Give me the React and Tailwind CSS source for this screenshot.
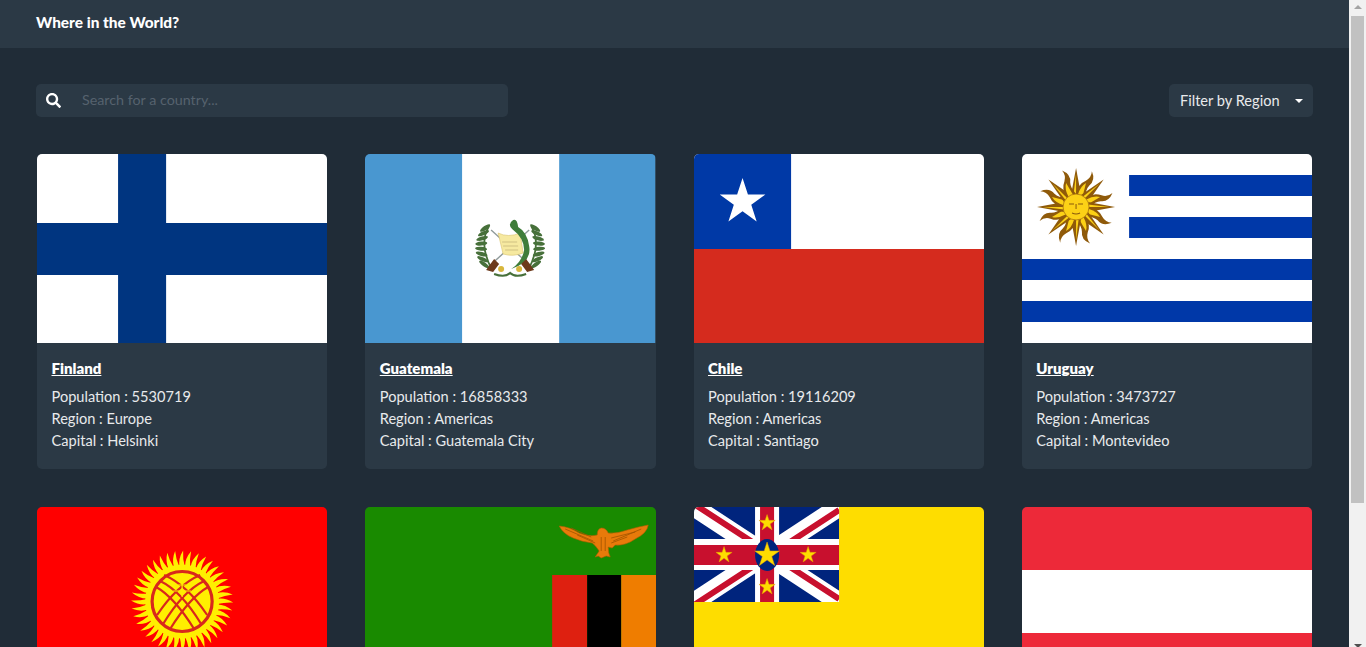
import React from "react";
import { FaSearch } from "react-icons/fa";

const range = (n) => Array.from({ length: n }, (_, i) => i);

const star = (cx, cy, r) =>
  range(10)
    .map((i) => {
      const rad = i % 2 === 0 ? r : r * 0.382;
      const a = (Math.PI / 5) * i - Math.PI / 2;
      return `${(cx + rad * Math.cos(a)).toFixed(2)},${(cy + rad * Math.sin(a)).toFixed(2)}`;
    })
    .join(" ");

function Finland() {
  return (
    <>
      <rect width="290" height="189" fill="#fff" />
      <rect x="81" width="48" height="189" fill="#003580" />
      <rect y="69" width="290" height="52" fill="#003580" />
    </>
  );
}

function Guatemala() {
  const leaves = range(8);
  return (
    <>
      <rect width="290" height="189" fill="#4997D0" />
      <rect x="97" width="97" height="189" fill="#fff" />
      <g stroke="#8f9a9a" strokeWidth="1.4">
        <line x1="122" y1="114" x2="164" y2="76" />
        <line x1="168" y1="114" x2="126" y2="76" />
      </g>
      {leaves.map((i) => (
        <g key={i} fill="#47703a">
          <ellipse cx={120 - Math.sin(i / 2.4) * 4} cy={74 + i * 5.2} rx="6" ry="2" transform={`rotate(${-35 + i * 10} ${120 - Math.sin(i / 2.4) * 4} ${74 + i * 5.2})`} />
          <ellipse cx={170 + Math.sin(i / 2.4) * 4} cy={74 + i * 5.2} rx="6" ry="2" transform={`rotate(${35 - i * 10} ${170 + Math.sin(i / 2.4) * 4} ${74 + i * 5.2})`} />
        </g>
      ))}
      <path d="M124 72Q113 90 127 116M166 72Q177 90 163 116" fill="none" stroke="#47703a" strokeWidth="1.8" />
      <path d="M133 79Q143 84 155 79L158 99Q148 103 138 100Z" fill="#f6e9a0" stroke="#d9c26b" strokeWidth=".6" />
      <path d="M137 88H152M138 92H153M140 96H153" stroke="#a89b66" strokeWidth=".5" />
      <path d="M148 66Q142 70 147 75Q159 84 159 96Q157 108 146 115Q167 108 164 92Q162 78 153 73Q152 64 148 66Z" fill="#3f7d3a" />
      <path d="M129 105L121 116L128 118L134 110ZM161 105L169 116L162 118L156 110Z" fill="#6d3a1c" />
      <circle cx="136" cy="115" r="3" fill="#d8b73c" />
      <circle cx="154" cy="115" r="3" fill="#d8b73c" />
      <path d="M129 120Q140 124 145 119Q150 124 161 120" fill="none" stroke="#47703a" strokeWidth="2" />
    </>
  );
}

function Chile() {
  return (
    <>
      <rect width="290" height="95" fill="#fff" />
      <rect y="95" width="290" height="94" fill="#D52B1E" />
      <rect width="97" height="95" fill="#0039A6" />
      <polygon points={star(48.5, 48, 24)} fill="#fff" />
    </>
  );
}

function Uruguay() {
  const cx = 54;
  const cy = 53;
  return (
    <>
      <rect width="290" height="189" fill="#fff" />
      <rect x="107" y="21" width="183" height="21" fill="#0038A8" />
      <rect x="107" y="63" width="183" height="21" fill="#0038A8" />
      <rect y="105" width="290" height="21" fill="#0038A8" />
      <rect y="147" width="290" height="21" fill="#0038A8" />
      {range(16).map((i) => (
        <g key={i} transform={`rotate(${i * 22.5} ${cx} ${cy})`}>
          <path
            d={
              i % 2 === 0
                ? `M${cx - 5} ${cy - 12}L${cx} ${cy - 39}L${cx + 5} ${cy - 12}Z`
                : `M${cx - 5} ${cy - 12}Q${cx - 7} ${cy - 22} ${cx - 1} ${cy - 28}Q${cx + 3} ${cy - 33} ${cx + 1} ${cy - 39}Q${cx + 8} ${cy - 32} ${cx + 4} ${cy - 25}Q${cx + 2} ${cy - 20} ${cx + 5} ${cy - 12}Z`
            }
            fill="#8f5a0a"
          />
          <path
            d={
              i % 2 === 0
                ? `M${cx - 2.6} ${cy - 12}L${cx} ${cy - 33}L${cx} ${cy - 12}Z`
                : `M${cx - 3} ${cy - 12}Q${cx - 4} ${cy - 21} ${cx} ${cy - 26}L${cx + 2} ${cy - 12}Z`
            }
            fill="#FCD116"
          />
        </g>
      ))}
      <circle cx={cx} cy={cy} r="13" fill="#FCD116" stroke="#a9740f" strokeWidth=".8" />
      <path d={`M${cx - 7} ${cy - 3}H${cx - 2}M${cx + 2} ${cy - 3}H${cx + 7}M${cx} ${cy - 3}V${cy + 2}M${cx - 4} ${cy + 6}Q${cx} ${cy + 8} ${cx + 4} ${cy + 6}`} stroke="#8a5a0c" strokeWidth="1" fill="none" />
    </>
  );
}

function Kyrgyzstan() {
  const cx = 145;
  const cy = 94.5;
  return (
    <>
      <rect width="290" height="189" fill="#FF0000" />
      {range(40).map((i) => (
        <path
          key={i}
          d={`M${cx - 2.6} ${cy - 35}Q${cx - 4} ${cy - 43} ${cx + 1} ${cy - 51}Q${cx + 0.5} ${cy - 43} ${cx + 2.6} ${cy - 35}Z`}
          fill="#FFEF00"
          transform={`rotate(${i * 9} ${cx} ${cy})`}
        />
      ))}
      <circle cx={cx} cy={cy} r="37" fill="#FFEF00" />
      <circle cx={cx} cy={cy} r="30" fill="#FFEF00" stroke="#D8281C" strokeWidth="3.2" />
      <g fill="none" stroke="#D8281C" strokeWidth="2.2">
        <path d="M163 68Q140 78 120 108M167 74Q146 84 126 117M171 80Q153 90 133 122" />
        <path d="M127 68Q150 78 170 108M123 74Q144 84 164 117M119 80Q137 90 157 122" />
      </g>
      <path d="M141 78h8M136 84h18M145 74v16" stroke="#FFEF00" strokeWidth="1.2" />
    </>
  );
}

function Zambia() {
  return (
    <>
      <rect width="291" height="189" fill="#198A00" />
      <rect x="187" y="68" width="35" height="121" fill="#DE2010" />
      <rect x="222" y="68" width="34" height="121" fill="#000" />
      <rect x="256" y="68" width="35" height="121" fill="#EF7D00" />
      <path
        d="M194 19Q205 20 214 26Q224 30 232 28Q232 22 236 21Q241 21 243 26Q252 27 262 23Q272 20 283 18Q282 26 270 32Q260 39 250 38L247 41L243 40Q243 46 245 50L241 49L236 51L233 49L230 50L234 44Q230 38 227 36Q217 35 208 31Q198 27 194 19Z"
        fill="#E87A0A"
        stroke="#b35c00"
        strokeWidth=".6"
      />
      <path d="M200 22L228 34M206 21L226 30M212 28L230 36M276 22L248 34M270 25L246 31M262 30L246 36M236 30L236 44M240 30L240 44" stroke="#a15400" strokeWidth=".8" fill="none" />
    </>
  );
}

function Niue() {
  return (
    <>
      <rect width="290" height="189" fill="#FEDD00" />
      <svg x="0" y="0" width="145" height="95" viewBox="0 0 145 95">
        <rect width="145" height="95" fill="#00247D" />
        <path d="M0 0L145 95M145 0L0 95" stroke="#fff" strokeWidth="19" />
        <path d="M0 0L72 47M145 95L73 48" stroke="#C8102E" strokeWidth="6" transform="translate(0 -3)" />
        <path d="M145 0L73 47M0 95L72 48" stroke="#C8102E" strokeWidth="6" transform="translate(0 3)" />
        <rect x="61" width="24" height="95" fill="#fff" />
        <rect y="32" width="145" height="31" fill="#fff" />
        <rect x="66" width="14" height="95" fill="#C8102E" />
        <rect y="38" width="145" height="20" fill="#C8102E" />
        <ellipse cx="73" cy="48" rx="12" ry="16" fill="#00247D" />
        <polygon points={star(73, 48, 13)} fill="#FEDD00" stroke="#e59a00" strokeWidth=".5" />
        <polygon points={star(73, 16, 8.5)} fill="#FEDD00" stroke="#e59a00" strokeWidth=".5" />
        <polygon points={star(73, 80, 8.5)} fill="#FEDD00" stroke="#e59a00" strokeWidth=".5" />
        <polygon points={star(30, 48, 8.5)} fill="#FEDD00" stroke="#e59a00" strokeWidth=".5" />
        <polygon points={star(114, 48, 8.5)} fill="#FEDD00" stroke="#e59a00" strokeWidth=".5" />
      </svg>
    </>
  );
}

function Austria() {
  return (
    <>
      <rect width="290" height="63" fill="#ED2939" />
      <rect y="63" width="290" height="63" fill="#fff" />
      <rect y="126" width="290" height="63" fill="#ED2939" />
    </>
  );
}

// the second row only shows its flags above the fold
const countries = [
  { name: "Finland", population: 5530719, region: "Europe", capital: "Helsinki", Flag: Finland },
  { name: "Guatemala", population: 16858333, region: "Americas", capital: "Guatemala City", Flag: Guatemala },
  { name: "Chile", population: 19116209, region: "Americas", capital: "Santiago", Flag: Chile },
  { name: "Uruguay", population: 3473727, region: "Americas", capital: "Montevideo", Flag: Uruguay },
  { name: "Kyrgyzstan", Flag: Kyrgyzstan },
  { name: "Zambia", Flag: Zambia },
  { name: "Niue", Flag: Niue },
  { name: "Austria", Flag: Austria },
];

function CountryCard({ country }) {
  const { name, population, region, capital, Flag } = country;
  return (
    <div className="overflow-hidden rounded-[5px] bg-[#2b3945]">
      <svg viewBox="0 0 290 189" preserveAspectRatio="none" className="block h-[189px] w-full">
        <Flag />
      </svg>
      {population && (
        <div className="h-[126px] px-[14.5px] pt-[14px] text-[14.6px] leading-[22px] text-[#e8eaec]">
          <a className="mb-[7px] block text-[15px] font-extrabold text-white underline">{name}</a>
          <p>Population : {population}</p>
          <p>Region : {region}</p>
          <p>Capital : {capital}</p>
        </div>
      )}
    </div>
  );
}

function Scrollbar() {
  return (
    <div className="flex h-full w-[17px] shrink-0 flex-col bg-[#f1f1f1]">
      <div className="flex h-[16px] shrink-0 justify-center pt-[5px]">
        <div className="h-0 w-0 border-x-[4px] border-b-[4px] border-x-transparent border-b-[#a3a3a3]" />
      </div>
      <div className="mx-[2px] h-[487px] shrink-0 bg-[#c1c1c1]" />
      <div className="h-[141px] shrink-0" />
      <div className="flex shrink-0 justify-center">
        <div className="h-0 w-0 border-x-[4px] border-t-[4px] border-x-transparent border-t-[#505050]" />
      </div>
    </div>
  );
}

export default function App() {
  return (
    <div className="flex h-[647px] overflow-hidden bg-[#202c37] font-['Lato','Noto_Sans',sans-serif] text-white">
      <div className="h-full min-w-0 flex-1">
        <header className="flex h-[48px] items-center bg-[#2b3945] px-[36px] pb-[3px]">
          <h1 className="text-[15.4px] font-black">Where in the World?</h1>
        </header>
        <div className="flex items-center justify-between px-[36px] pt-[36px]">
          <div className="flex h-[33px] w-[472px] items-center rounded-[5px] bg-[#2b3945] pl-[10px]">
            <FaSearch className="h-[15px] w-[15px] text-white" />
            <input
              placeholder="Search for a country..."
              className="ml-[21px] flex-1 bg-transparent pb-[2px] text-[14.3px] outline-none placeholder:text-[#56626e]"
            />
          </div>
          <button className="flex h-[33px] w-[144px] items-center rounded-[5px] bg-[#2b3945] pl-[11px] text-[14.6px] text-[#e8eaec]">
            Filter by Region
            <span className="ml-[15px] h-0 w-0 border-x-[4.5px] border-t-[4.5px] border-x-transparent border-t-white" />
          </button>
        </div>
        <div className="grid grid-cols-4 gap-x-[38px] gap-y-[38px] px-[37px] pt-[37px]">
          {countries.map((country) => (
            <CountryCard key={country.name} country={country} />
          ))}
        </div>
      </div>
      <Scrollbar />
    </div>
  );
}
